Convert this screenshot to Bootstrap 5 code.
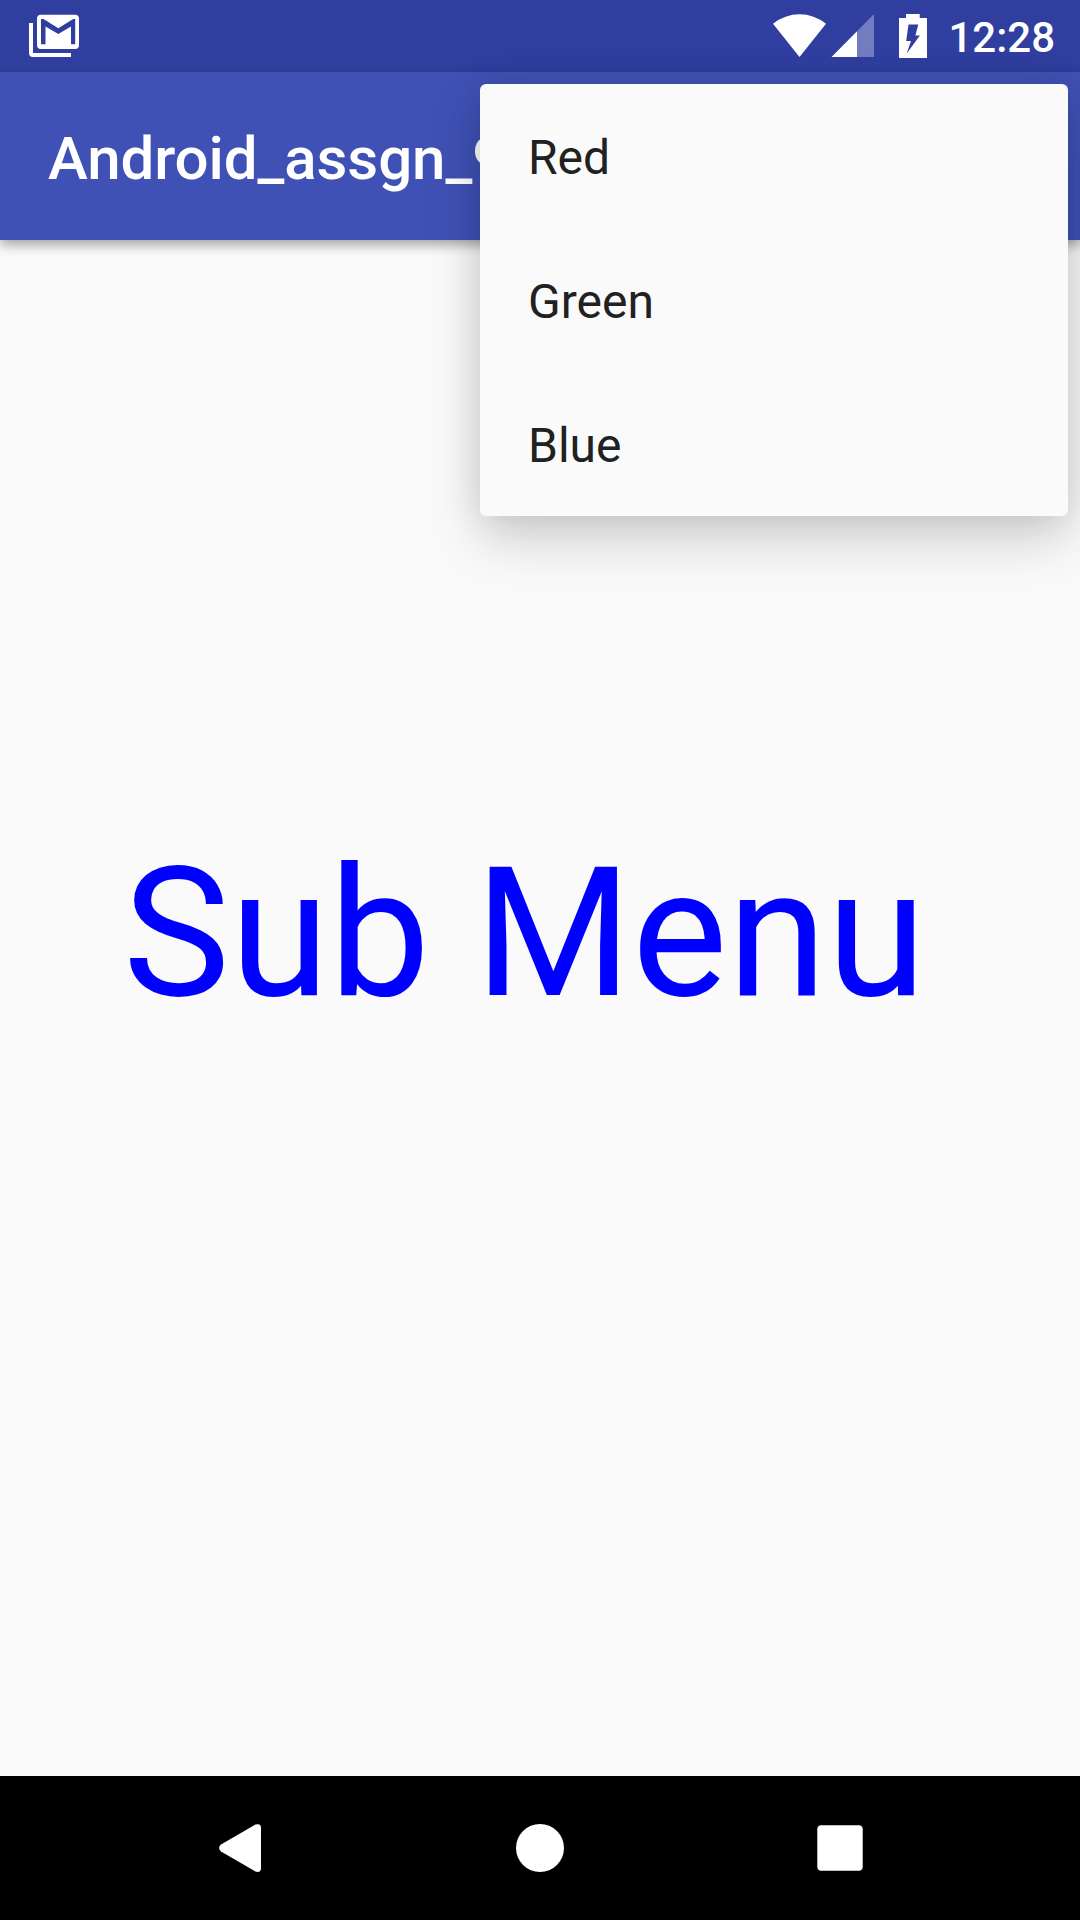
<!DOCTYPE html>
<html lang="en">
<head>
<meta charset="utf-8">
<meta name="viewport" content="width=device-width, initial-scale=1">
<title>Android_assgn_9</title>
<link href="https://cdn.jsdelivr.net/npm/bootstrap@5.3.0/dist/css/bootstrap.min.css" rel="stylesheet">
<style>
  body { font-family: Roboto, "Noto Sans", sans-serif; background: #fafafa; }
  .screen { width: 1080px; height: 1920px; }
  .status-bar { height: 72px; background: #303f9f; padding: 0 25px 0 28px; }
  .status-bar svg { display: block; }
  .clock { font-size: 42px; font-weight: 500; line-height: 72px; padding-top: 2px; margin-left: 18px; }
  .app-bar { height: 168px; background: #3f51b5; padding: 5px 48px 0; box-shadow: 0 5px 11px rgba(0,0,0,.34); z-index: 1; }
  .app-title { font-size: 60px; font-weight: 500; line-height: 1; letter-spacing: -.08px; }
  .popup { top: 84px; left: 480px; width: 588px; background: #fafafa; border-radius: 6px; z-index: 5;
    box-shadow: 0 24px 54px rgba(0,0,0,.17), 0 0 36px rgba(0,0,0,.1); }
  .popup-item { height: 144px; padding: 4px 48px 0; font-size: 48px; color: #212121; line-height: 1; }
  .stage { padding: 604px 0 0 123px; }
  .headline { font-size: 180px; line-height: 180px; color: #00f; font-weight: 400; }
  .nav-keys { height: 144px; padding: 0 216px; }
</style>
<script src="https://cdn.jsdelivr.net/npm/bootstrap@5.3.0/dist/js/bootstrap.bundle.min.js"></script>
</head>
<body class="m-0">
<div class="screen position-relative overflow-hidden d-flex flex-column">
  <header class="status-bar d-flex justify-content-between text-white">
    <!-- notification: stacked mail -->
    <svg width="52" height="72" viewBox="28 0 52 72" fill="#fff" aria-label="Mail">
      <path d="M29 23h4v30h38v4H33q-4 0-4-4z"/>
      <path fill-rule="evenodd" d="M41 14.700h34q4 0 4 4V45q0 4-4 4H41q-4 0-4-4V18.700q0-4 4-4zM41 19v25.200h4.500V26.500L58.300 34 71 26.500v17.700h4.200V19h-2L58.300 28.200 43.500 19z"/>
    </svg>
    <div class="d-flex">
      <svg width="160" height="72" viewBox="770 0 160 72" fill="#fff" aria-label="Status">
        <path d="M799.500 57L773 23.800Q785 14.300 799.500 14.300T826 23.800z"/>
        <path d="M874 14v43h-17V31.200z" opacity=".32"/>
        <path d="M831.500 57L857 31.200V57z"/>
        <path fill-rule="evenodd" d="M906 14h13.700v4H927v40h-28V18h7zM908.500 24.500L906.200 41h4.800l-4.300 12.600L919.900 35.500h-4.500l2.900-11z"/>
      </svg>
      <span class="clock">12:28</span>
    </div>
  </header>
  <nav class="app-bar d-flex align-items-center position-relative text-white">
    <h1 class="app-title m-0">Android_assgn_9</h1>
  </nav>
  <main class="stage flex-grow-1">
    <div class="headline text-nowrap">Sub Menu</div>
  </main>
  <footer class="nav-keys d-flex justify-content-between align-items-center bg-black">
    <svg width="48" height="48" viewBox="0 0 48 48" fill="#fff" aria-label="Back"><path d="M5 20.500L39.500.500Q44.800-1 45 3.500v41q-.2 4.500-5.500 3L5 27.500Q1.200 24 5 20.500z"/></svg>
    <svg width="48" height="48" viewBox="0 0 48 48" fill="#fff" aria-label="Home"><circle cx="24" cy="24" r="24"/></svg>
    <svg width="48" height="48" viewBox="0 0 48 48" fill="#fff" aria-label="Recents"><rect x="1.300" y="1.300" width="45.400" height="45.400" rx="4"/></svg>
  </footer>
  <div class="popup position-absolute">
    <div class="popup-item d-flex align-items-center">Red</div>
    <div class="popup-item d-flex align-items-center">Green</div>
    <div class="popup-item d-flex align-items-center">Blue</div>
  </div>
</div>
</body>
</html>
